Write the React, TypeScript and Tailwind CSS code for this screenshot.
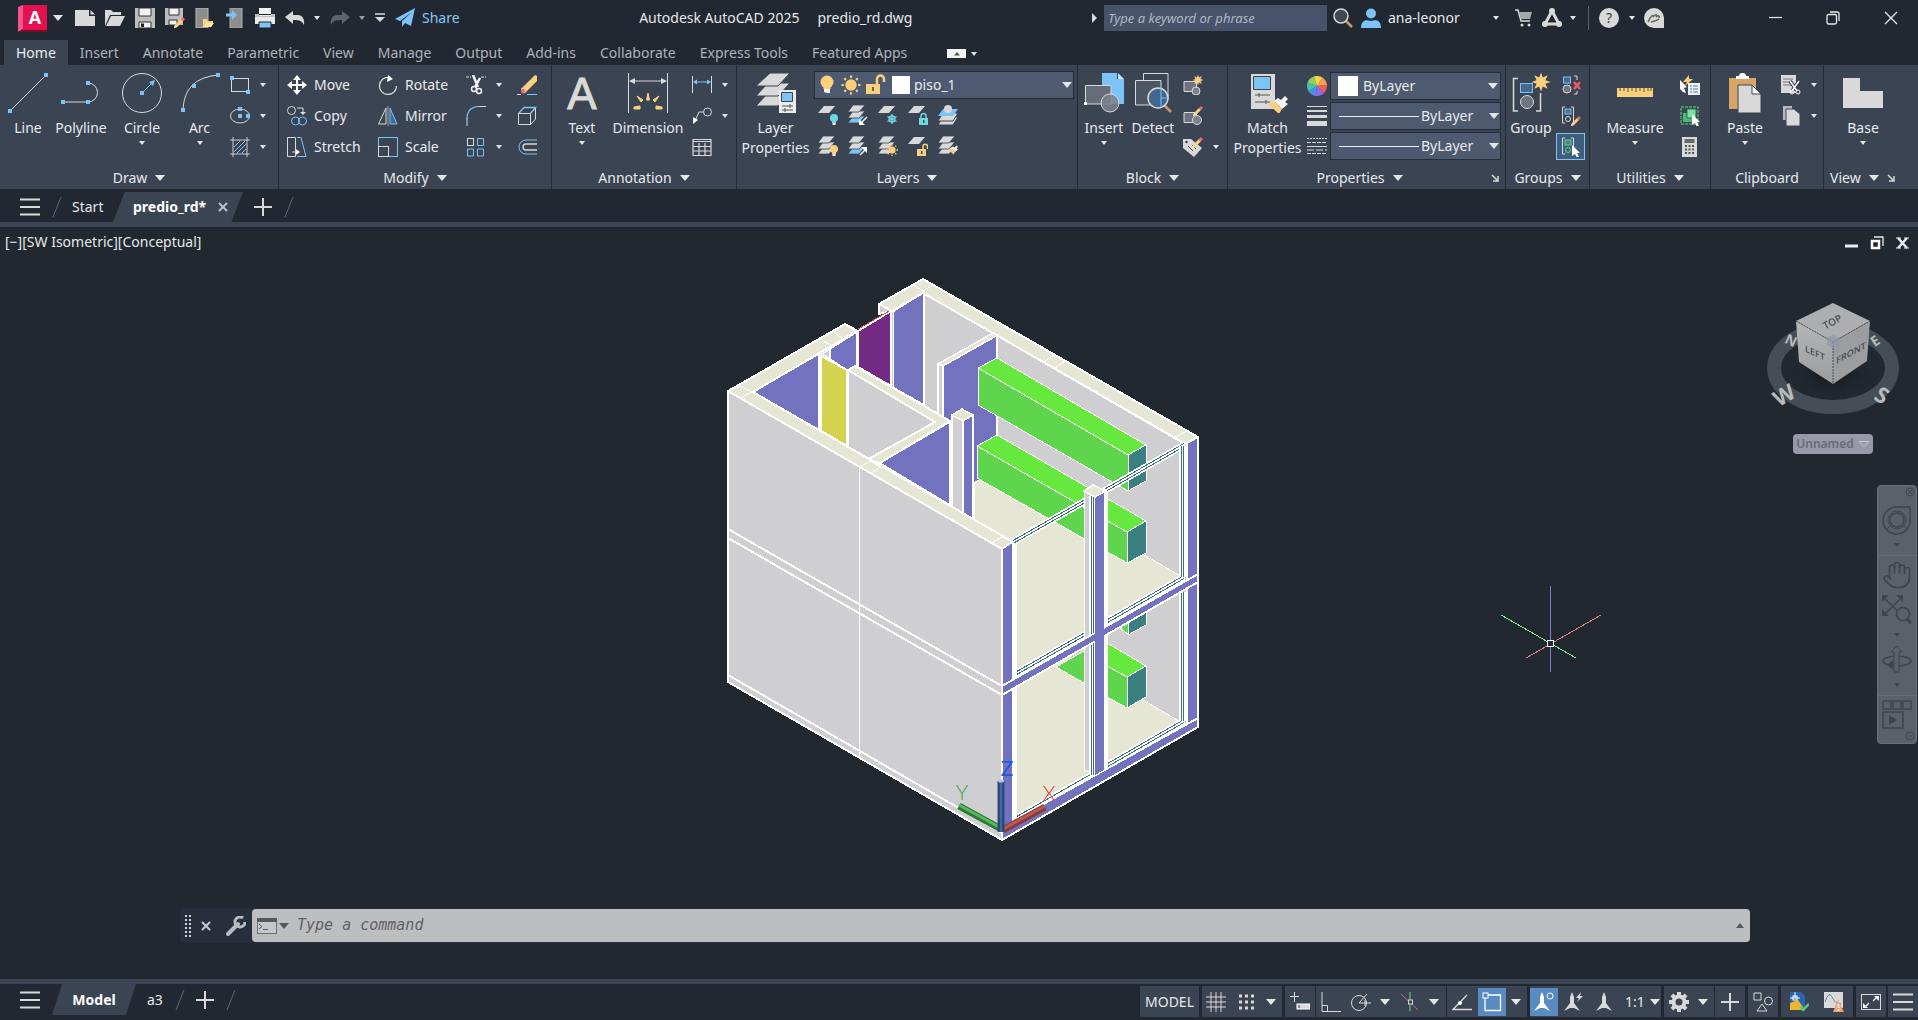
import type { ReactNode } from "react";
import { Hand, X } from "lucide-react";
import { clsx } from "clsx";

const RIBBON_TABS = [
  "Insert",
  "Annotate",
  "Parametric",
  "View",
  "Manage",
  "Output",
  "Add-ins",
  "Collaborate",
  "Express Tools",
  "Featured Apps",
];

const LIGHT = "#d9d9d9";
const BLUE = "#7cc3f7";
const AMBER = "#fbd07c";
const TEAL = "#6fd9e0";

/* ---------- primitives ---------- */

function Ico({ w = 20, h = 20, children }: { w?: number; h?: number; children: ReactNode }) {
  return (
    <svg width={w} height={h} viewBox={`0 0 ${w} ${h}`} fill="none" aria-hidden className="shrink-0">
      {children}
    </svg>
  );
}

function Caret({ small = false, className }: { small?: boolean; className?: string }) {
  return small ? (
    <svg width="6" height="4" viewBox="0 0 6 4" aria-hidden className={clsx("shrink-0", className)}>
      <path d="M0 0H6L3 4Z" fill="#e4e6e8" />
    </svg>
  ) : (
    <svg width="10" height="6" viewBox="0 0 10 6" aria-hidden className={clsx("shrink-0", className)}>
      <path d="M0 0H10L5 6Z" fill="#e4e6e8" />
    </svg>
  );
}

function Panel({
  title,
  className,
  caret = true,
  launcher = false,
  children,
}: {
  title: string;
  className: string;
  caret?: boolean;
  launcher?: boolean;
  children: ReactNode;
}) {
  return (
    <section className={clsx("flex shrink-0 flex-col border-r border-[#242b36]", className)}>
      <div className="flex h-[102px]">{children}</div>
      <div className="flex h-[22px] items-center">
        <button className="flex flex-1 items-center justify-center gap-2">
          {title}
          {caret && <Caret />}
        </button>
        {launcher && (
          <button aria-label={`${title} settings`} className="pr-1.5">
            <Ico w={8} h={8}>
              <path d="M1 1L6 6M7 2V7H2" stroke={LIGHT} strokeWidth="1.5" />
            </Ico>
          </button>
        )}
      </div>
    </section>
  );
}

function Big({
  label,
  second,
  menu = false,
  className,
  children,
}: {
  label: string;
  second?: string;
  menu?: boolean;
  className: string;
  children: ReactNode;
}) {
  return (
    <button className={clsx("flex shrink-0 flex-col items-center pt-2 leading-5 whitespace-nowrap", className)}>
      {children}
      <span className="mt-[5px]">{label}</span>
      {second && <span>{second}</span>}
      {menu && <Caret small className="mt-[3px]" />}
    </button>
  );
}

function Small({
  name,
  label,
  menu = false,
  className,
  children,
}: {
  name: string;
  label?: string;
  menu?: boolean;
  className?: string;
  children: ReactNode;
}) {
  return (
    <button aria-label={name} className={clsx("flex h-[31px] items-center", className)}>
      {children}
      {label && <span className="ml-[7px]">{label}</span>}
      {menu && <Caret small className="ml-[10px]" />}
    </button>
  );
}

function Col({ className, children }: { className?: string; children: ReactNode }) {
  return <div className={clsx("flex shrink-0 flex-col pt-1", className)}>{children}</div>;
}

/* ---------- icon fragments ---------- */

const node = (x: number, y: number) => <rect x={x - 2} y={y - 2} width="4" height="4" fill={BLUE} />;

function Stack({ last = LIGHT }: { last?: string }) {
  return (
    <g stroke="#3b4453" strokeWidth="0.8">
      <path d="M5 11H17L11 18H0Z" fill={last} />
      <path d="M5 6H17L11 13H0Z" fill={LIGHT} />
      <path d="M5 0H17L11 7H0Z" fill={LIGHT} />
    </g>
  );
}

const Sheet = () => <path d="M6 1H17L11 8H0Z" fill={LIGHT} />;

function Bulb({ x, y, fill }: { x: number; y: number; fill: string }) {
  return (
    <g transform={`translate(${x} ${y})`}>
      <circle cx="4" cy="4" r="4" fill={fill} />
      <path d="M2 6H6V9H2Z" fill={fill} />
      <path d="M2.5 9H5.500V11H2.500Z" fill="#fff" />
    </g>
  );
}

function Sun({ x, y, r }: { x: number; y: number; r: number }) {
  return (
    <g transform={`translate(${x} ${y})`}>
      <circle r={r * 0.6} fill={AMBER} />
      {[0, 45, 90, 135, 180, 225, 270, 315].map((a) => (
        <path key={a} d={`M0 ${-r * 0.75}V${-r}`} stroke={AMBER} strokeWidth={r * 0.22} transform={`rotate(${a})`} />
      ))}
    </g>
  );
}

function Lock({ x, y, fill, open = false }: { x: number; y: number; fill: string; open?: boolean }) {
  return (
    <g transform={`translate(${x} ${y})`}>
      <rect y="5" width="9" height="7" fill={fill} />
      <path d={open ? "M6 5V2.500A2 2 0 0 1 10.500 2.500V5" : "M2 5V3A2.500 2.500 0 0 1 7 3V5"} stroke={fill} strokeWidth="1.500" />
      <rect x="4" y="7" width="1.500" height="3" fill="#4a4a3c" />
    </g>
  );
}

function Pencil({ x, y, s = 1 }: { x: number; y: number; s?: number }) {
  return (
    <g transform={`translate(${x} ${y}) scale(${s})`}>
      <path d="M0 10L1 7L6 2L8 4L3 9Z" fill={AMBER} />
      <path d="M6 2L8 0L10 2L8 4Z" fill="#ef6a6a" />
      <path d="M0 10L1 7L3 9Z" fill="#f3ead8" />
    </g>
  );
}

function Burst({ x, y, r }: { x: number; y: number; r: number }) {
  const pts = Array.from({ length: 16 }, (_, i) => {
    const a = (i * Math.PI) / 8 - Math.PI / 2;
    const k = i % 2 ? r * 0.5 : r;
    return `${x + Math.cos(a) * k},${y + Math.sin(a) * k}`;
  }).join(" ");
  return <polygon points={pts} fill={AMBER} />;
}

const Cursor = ({ x, y }: { x: number; y: number }) => (
  <path d="M0 0L8 8H5L7 12L5 13L3 9L0 11Z" fill="#fff" transform={`translate(${x} ${y})`} />
);

function Brush({ x, y, s = 1 }: { x: number; y: number; s?: number }) {
  return (
    <g transform={`translate(${x} ${y}) scale(${s})`}>
      <path d="M0 7L6 4L14 12L11 17Z" fill={AMBER} />
      <path d="M6 4L10 1L13 3L17 -1L20 2L17 5L20 7L14 12Z" fill="#f4f4f4" />
    </g>
  );
}

/* ---------- title bar ---------- */

function TitleBar() {
  return (
    <header className="flex h-10 items-center pb-1 whitespace-nowrap">
      <div className="flex items-center pl-[18px]">
        <button aria-label="Application menu" className="flex items-center gap-1.5">
          <svg width="29" height="28" viewBox="0 0 29 28" aria-hidden>
            <path d="M0 3L5 1V25L0 28Z" fill="#f0598c" />
            <path d="M0 28L5 25H29V28Z" fill="#7d0d2c" />
            <rect x="5" y="1" width="24" height="25" fill="#e51050" />
            <text x="17" y="20" textAnchor="middle" fontSize="18" fontWeight="700" fill="#fff" className="[font-family:'Open_Sans',sans-serif]">A</text>
          </svg>
          <Caret />
        </button>
        <div className="ml-3 flex items-center gap-[10px]">
          <button aria-label="New">
            <Ico><path d="M0 2H14V8H20V18H0Z" fill={LIGHT} /><path d="M15.500 2L20 6.500H15.500Z" fill={LIGHT} /></Ico>
          </button>
          <button aria-label="Open">
            <Ico><path d="M0 18V2H6L8 4H16V7H5L0 18Z" fill={LIGHT} /><path d="M1 18L6 8H20L15 18Z" fill={LIGHT} /></Ico>
          </button>
          <button aria-label="Save">
            <Ico><path d="M0 0H20V20H0Z" fill="#bdbdbd" /><path d="M4 0H16V8H4Z" fill="#f2f2f2" stroke="#333" strokeWidth="1" /><path d="M4 14H16V20H4Z" fill="#f2f2f2" stroke="#333" strokeWidth="1" /><path d="M6 15.500H9V19H6Z" fill="#222" /></Ico>
          </button>
          <button aria-label="Save as">
            <Ico><path d="M0 0H18V17H0Z" fill="#bdbdbd" /><path d="M4 0H14V7H4Z" fill="#f2f2f2" stroke="#333" /><path d="M4 12H12V17H4Z" fill="#f2f2f2" stroke="#333" /><Pencil x={9} y={9} s={1.1} /></Ico>
          </button>
          <button aria-label="Open from mobile">
            <Ico><rect x="1" y="0" width="12" height="20" fill="#8d8d8d" stroke="#c4b9a8" /><path d="M8 19V11H12L13 13H18V15L16 19Z" fill={AMBER} /><path d="M8 19L11 15H19L16 19Z" fill="#ffe3a5" /></Ico>
          </button>
          <button aria-label="Save to mobile">
            <Ico><rect x="5" y="0" width="12" height="20" fill="#8d8d8d" stroke="#aaa" /><path d="M1 5.500H7V2L12 7L7 12V8.500H1Z" fill={BLUE} /></Ico>
          </button>
          <button aria-label="Plot">
            <Ico><path d="M4 0H16V6H4Z" fill="#f4f4f4" /><path d="M0 7H20V16H0Z" fill="#e9e9e9" /><path d="M0 6H4V8H16V6H20V9H0Z" fill="#bfbfbf" /><path d="M4 14H16V20H4Z" fill={BLUE} stroke="#222831" /></Ico>
          </button>
          <button aria-label="Undo">
            <Ico><path d="M0 9L8 3V7H13C17 7 20 11 19 17C17 13 15 12 8 12V16Z" fill={LIGHT} /></Ico>
          </button>
        </div>
        <Caret small className="ml-[9px]" />
        <button aria-label="Redo" className="ml-[10px]">
          <Ico><path d="M20 9L12 3V7H7C3 7 0 11 1 17C3 13 5 12 12 12V16Z" fill="#5c636d" /></Ico>
        </button>
        <Caret small className="ml-[9px] opacity-60" />
        <button aria-label="Customize toolbar" className="ml-[10px]">
          <Ico w={10} h={10}><path d="M0 1H10" stroke={LIGHT} strokeWidth="1.500" /><path d="M0 4H10L5 9Z" fill={LIGHT} /></Ico>
        </button>
        <button className="ml-[10px] flex items-center gap-[7px] text-[#86c8f6]">
          <Ico><path d="M0 11L20 0L16 18L10 15L7 19V13L17 4L5 13Z" fill={BLUE} /></Ico>
          Share
        </button>
      </div>

      <h1 className="flex flex-1 justify-center gap-[18px] text-[#e6e8ea]">
        <span>Autodesk AutoCAD 2025</span>
        <span>predio_rd.dwg</span>
      </h1>

      <div className="-mr-0.5 flex items-center">
        <Ico w={6} h={10}><path d="M0 0L5 5L0 10Z" fill={LIGHT} /></Ico>
        <input
          aria-label="Search"
          placeholder="Type a keyword or phrase"
          className="ml-1.5 h-[26px] w-[223px] bg-[#47536a] px-1 text-[13px] italic placeholder:text-[#b0b7c3]"
        />
        <button aria-label="Run search" className="ml-1.5">
          <Ico><path d="M13 13L19 19" stroke="#c9986b" strokeWidth="2.500" /><circle cx="8" cy="8" r="7" stroke={LIGHT} strokeWidth="1.500" fill="#41474f" /></Ico>
        </button>
        <button className="ml-2 flex w-[142px] items-center gap-[7px]">
          <Ico><circle cx="10" cy="5.500" r="5" fill={BLUE} /><path d="M0 20C0 13 4 11 10 13C16 11 20 13 20 20Z" fill={BLUE} /></Ico>
          ana-leonor
          <Caret small className="mr-1 ml-auto" />
        </button>
        <button aria-label="Store" className="ml-3">
          <Ico w={17} h={18}><path d="M0 1H3L6 12H15" stroke={LIGHT} strokeWidth="1.500" /><path d="M4 3H17L15 10H6Z" fill="#a5a8ac" /><circle cx="7" cy="16" r="1.500" fill={LIGHT} /><circle cx="14" cy="16" r="1.500" fill={LIGHT} /></Ico>
        </button>
        <button aria-label="Autodesk apps" className="ml-[10px] flex items-center gap-2">
          <Ico><path d="M10 3L17 16H3Z" stroke={LIGHT} strokeWidth="3" /><circle cx="10" cy="3" r="3" fill={LIGHT} /><circle cx="3" cy="16" r="3" fill={LIGHT} /><circle cx="17" cy="16" r="3" fill={LIGHT} /></Ico>
          <Caret small />
        </button>
        <span className="ml-3 h-6 w-px bg-[#59616c]" />
        <button aria-label="Help" className="ml-2.5 flex items-center gap-2.5">
          <Ico><circle cx="10" cy="10" r="10" fill={LIGHT} /><text x="10" y="15" textAnchor="middle" fontSize="14" fill="#333b46">?</text></Ico>
          <Caret small />
        </button>
        <button aria-label="Assistant" className="ml-[9px]">
          <Ico><path d="M10 0A10 10 0 1 0 10 20H20V10A10 10 0 0 0 10 0Z" fill={LIGHT} /><path d="M4 14C7 7 10 6 9 9C11 6 14 6 12 9C14 7 16 8 15 10M7 14C9 13 13 13 15 11" stroke="#666" strokeWidth="1.500" /></Ico>
        </button>
        <button aria-label="Minimize" className="ml-[82px] flex w-[58px] justify-center">
          <Ico w={13} h={14}><path d="M0 6.500H13" stroke="#e8eaec" strokeWidth="1.200" /></Ico>
        </button>
        <button aria-label="Restore" className="flex w-[58px] justify-center">
          <Ico w={14} h={14}><rect x="1" y="3.500" width="9.500" height="9.500" rx="1.500" stroke="#e8eaec" strokeWidth="1.300" /><path d="M4 1H11Q13 1 13 3V10" stroke="#e8eaec" strokeWidth="1.300" /></Ico>
        </button>
        <button aria-label="Close" className="flex w-[58px] justify-center">
          <Ico w={14} h={14}><path d="M1 1L13 13M13 1L1 13" stroke="#e8eaec" strokeWidth="1.300" /></Ico>
        </button>
      </div>
    </header>
  );
}

/* ---------- ribbon ---------- */

function RibbonTabs() {
  return (
    <nav className="flex h-[25px] items-stretch pl-1 whitespace-nowrap text-[#aeb3ba]">
      <button className="bg-[#3b4453] px-3 text-[#eceef0]">Home</button>
      {RIBBON_TABS.map((t) => (
        <button key={t} className="px-3">{t}</button>
      ))}
      <button aria-label="Minimize ribbon" className="ml-7 flex items-center gap-[5px] pt-0.5">
        <Ico w={19} h={9}><rect width="19" height="9" fill="#f2f2f2" /><path d="M7 6.500H13L10 3Z" fill="#555" /></Ico>
        <Caret small />
      </button>
    </nav>
  );
}

function DrawPanel() {
  return (
    <Panel title="Draw" className="w-[279px]">
      <Big label="Line" className="w-14">
        <Ico w={40} h={40}><path d="M2 38L38 2" stroke={LIGHT} />{node(2, 38)}{node(38, 2)}</Ico>
      </Big>
      <Big label="Polyline" className="w-[50px]">
        <Ico w={40} h={40}><path d="M1 29H27A9.500 9.500 0 0 0 27 10" stroke={LIGHT} />{node(2, 29)}{node(27, 29)}{node(27, 10)}</Ico>
      </Big>
      <Big label="Circle" menu className="w-[72px]">
        <Ico w={40} h={40}><circle cx="20" cy="20" r="19.500" stroke={LIGHT} /><path d="M20 20L30 10" stroke={BLUE} />{node(20, 20)}<path d="M27 9L33 7L31 13Z" fill={BLUE} /></Ico>
      </Big>
      <Big label="Arc" menu className="w-[43px]">
        <Ico w={40} h={40}><path d="M3 37Q4 5 38 2" stroke={LIGHT} />{node(3, 37)}{node(14, 13)}{node(38, 2)}</Ico>
      </Big>
      <Col className="ml-[9px]">
        <Small name="Rectangle" menu>
          <Ico><rect x="1.500" y="3.500" width="17" height="13" stroke={LIGHT} />{node(2, 3)}{node(18, 17)}</Ico>
        </Small>
        <Small name="Ellipse" menu>
          <Ico><ellipse cx="10" cy="10" rx="9.500" ry="7" stroke={LIGHT} />{node(10, 3)}{node(10, 10)}{node(18, 10)}</Ico>
        </Small>
        <Small name="Hatch" menu>
          <Ico><path d="M0 3H20M0 17H20M3 0V20M17 0V20" stroke={LIGHT} strokeWidth="0.900" /><path d="M4 10L10 4M4 15L15 4M7 16L16 7M12 16L16 12" stroke={BLUE} /></Ico>
        </Small>
      </Col>
    </Panel>
  );
}

function ModifyPanel() {
  return (
    <Panel title="Modify" className="w-[273px]">
      <Col className="ml-2 w-[91px]">
        <Small name="Move" label="Move">
          <Ico><path d="M10 1V19M1 10H19" stroke="#fff" strokeWidth="2" /><path d="M6 5L10 0L14 5ZM6 15L10 20L14 15ZM5 6L0 10L5 14ZM15 6L20 10L15 14Z" fill="#fff" /></Ico>
        </Small>
        <Small name="Copy" label="Copy">
          <Ico><circle cx="4.500" cy="4.500" r="4" stroke={LIGHT} /><path d="M10 2H16V7" stroke={LIGHT} /><path d="M13 6H19L16 9Z" fill={LIGHT} /><circle cx="8.500" cy="15" r="4" stroke={BLUE} /><circle cx="15.500" cy="15" r="4" stroke={BLUE} /></Ico>
        </Small>
        <Small name="Stretch" label="Stretch">
          <Ico><path d="M0.500 0.500H8.500V19.500H0.500Z" stroke={LIGHT} /><path d="M10 .5H14L19 19.500H10" stroke={BLUE} /><path d="M5 15H12" stroke={LIGHT} /><path d="M9 12L13 15L9 18Z" fill="#fff" /></Ico>
        </Small>
      </Col>
      <Col className="w-[88px]">
        <Small name="Rotate" label="Rotate">
          <Ico><path d="M11 2.500A8.500 8.500 0 1 0 18.500 11" stroke={LIGHT} strokeWidth="1.300" /><path d="M10 0L15 4L9 7Z" fill="#fff" /></Ico>
        </Small>
        <Small name="Mirror" label="Mirror">
          <Ico><path d="M8 2V18H.5Z" stroke={LIGHT} /><path d="M12 2V18H19Z" stroke={BLUE} fill="#3f6d90" /><path d="M10 0V20" stroke="#98a0aa" /></Ico>
        </Small>
        <Small name="Scale" label="Scale">
          <Ico><rect x=".5" y=".5" width="19" height="19" stroke={BLUE} /><rect x=".5" y="9.500" width="10" height="10" stroke={LIGHT} fill="#3b4453" /></Ico>
        </Small>
      </Col>
      <Col className="w-[51px]">
        <Small name="Trim" menu>
          <Ico><path d="M0 2H5M15 2H20" stroke={LIGHT} strokeDasharray="3 1" /><path d="M7 0L12 12M14 3L9 12" stroke="#f4f4f4" strokeWidth="2.500" /><circle cx="8" cy="14" r="2.500" stroke="#f4f4f4" strokeWidth="1.500" /><circle cx="13" cy="16" r="2.500" stroke="#f4f4f4" strokeWidth="1.500" /></Ico>
        </Small>
        <Small name="Fillet" menu>
          <Ico><path d="M1 20V12M13 .5H20" stroke={LIGHT} /><path d="M1 13Q1 1 13 .5" stroke={BLUE} strokeWidth="1.200" /></Ico>
        </Small>
        <Small name="Array" menu>
          <Ico><rect x="1.500" y="1.500" width="6" height="7" stroke={LIGHT} /><path d="M11.500 1.500H17.500V8.500H11.500ZM1.500 12H7.500V19H1.500ZM11.500 12H17.500V19H11.500Z" stroke={BLUE} /></Ico>
        </Small>
      </Col>
      <Col>
        <Small name="Erase">
          <Ico><path d="M0 19.500H4" stroke={LIGHT} /><path d="M10 19.500H20" stroke={BLUE} /><path d="M6 12L18 0L20 1V6L9 17Z" fill={AMBER} /><path d="M6 12L9 17L7 18.500L4 14Z" fill="#fff" /><ellipse cx="6" cy="16" rx="2" ry="2.500" fill="#ef6a6a" /></Ico>
        </Small>
        <Small name="Explode">
          <Ico><path d="M1.500 7.500H13.500V18.500H1.500ZM13.500 7.500L18.500 1.500V13L13.500 18.500" stroke={LIGHT} /><path d="M1.500 7.500L7 1.500H18.500L13.500 7.500" stroke={BLUE} strokeWidth="1.400" /></Ico>
        </Small>
        <Small name="Offset">
          <Ico><path d="M20 3H9A7 7 0 0 0 9 17H20" stroke={BLUE} /><path d="M20 7H9A3 3 0 0 0 9 13H20" stroke={LIGHT} strokeWidth="1.300" /></Ico>
        </Small>
      </Col>
    </Panel>
  );
}

function AnnotationPanel() {
  return (
    <Panel title="Annotation" className="w-[185px]">
      <Big label="Text" menu className="w-[60px]">
        <svg width="40" height="40" viewBox="0 0 40 40" aria-hidden className="overflow-visible">
          <text x="20" y="36" textAnchor="middle" fontSize="44" fill={LIGHT} stroke={LIGHT} className="[font-family:'Liberation_Sans',sans-serif]">A</text>
        </svg>
      </Big>
      <Big label="Dimension" className="w-[72px]">
        <Ico w={40} h={40}>
          <path d="M.5 0V40M39.500 0V40M2 8H38" stroke={LIGHT} />
          <path d="M1 8L7 5V11ZM39 8L33 5V11Z" fill={LIGHT} />
          <path d="M18.500 27L20 20L21.500 27ZM13 29L9 23L15 27ZM27 29L31 23L25 27ZM12 33L6 34V36H12ZM28 33L34 34V36H28Z" fill={AMBER} stroke={AMBER} />
        </Ico>
      </Big>
      <Col className="ml-2">
        <Small name="Linear" menu>
          <Ico><path d="M.5 1V18M19.500 1V18" stroke={LIGHT} /><path d="M2 7H18" stroke={BLUE} /><path d="M1 7L5 4.500V9.500ZM19 7L15 4.500V9.500Z" fill={BLUE} /></Ico>
        </Small>
        <Small name="Leader" menu>
          <Ico><circle cx="15.500" cy="6" r="4" stroke={LIGHT} /><path d="M11 6H7L3 15" stroke={LIGHT} /><path d="M1 18L1 11L6 14Z" fill="#fff" /></Ico>
        </Small>
        <Small name="Table">
          <Ico><path d="M1 2.500H19V18.500H1ZM1 4.500H19M1 9.500H19M1 14H19M7 6V18M13 6V18" stroke={LIGHT} strokeWidth="1.200" /></Ico>
        </Small>
      </Col>
    </Panel>
  );
}

function LayersPanel() {
  return (
    <Panel title="Layers" className="w-[341px]">
      <Big label="Layer" second="Properties" className="w-[77px]">
        <Ico w={40} h={40}>
          <g fill={LIGHT} stroke="#3b4453">
            <path d="M12 20H34L22 33H0Z" /><path d="M12 10H34L22 23H0Z" /><path d="M14 0H34L22 13H0Z" />
          </g>
          <path d="M23 17H40V40H23Z" fill="#ececec" /><path d="M25.500 19.500H36.500V28.500H25.500Z" fill={BLUE} stroke="#444" /><path d="M26 33H37M26 37H37M34 31V35M29 35V39" stroke="#555" />
        </Ico>
      </Big>
      <div className="flex flex-col pt-1.5">
        <div className="flex h-7 w-[260px] items-center border border-[#262d39] bg-[#4d5a6f] pl-1">
          <Ico w={84} h={22}>
            <circle cx="8" cy="8" r="6.500" fill={AMBER} /><path d="M4.500 11H11.500V15H4.500Z" fill={AMBER} /><path d="M5 15H11V19H8L5 18Z" fill="#f4f4f4" />
            <Sun x={32} y={11} r={9.5} />
            <path d="M47 10H61V20H47Z" fill={AMBER} /><path d="M58 10V5A3.500 3.500 0 0 1 65 5V8" stroke={AMBER} strokeWidth="2.500" /><path d="M54 13V17" stroke="#443" strokeWidth="1.500" />
            <rect x="73" y="2" width="11" height="18" fill="#fff" />
          </Ico>
          <span className="-ml-1 h-[18px] w-[11px] bg-white" />
          <select aria-label="Layer" className="min-w-0 flex-1 appearance-none bg-transparent pl-1 text-sm"><option>piso_1</option></select>
          <Caret className="mr-px" />
        </div>
        <div className="flex gap-[10px] pl-1">
          <Small name="Off"><Ico><Sheet /><Bulb x={12} y={9} fill={TEAL} /></Ico></Small>
          <Small name="Make current"><Ico><Stack last={BLUE} /><path d="M19 12L13 18" stroke="#fff" strokeWidth="1.500" /><path d="M11 20V14L17 20Z" fill="#fff" /></Ico></Small>
          <Small name="Freeze"><Ico><Sheet /><g stroke={TEAL} strokeWidth="1.300"><path d="M14 9V19M9.500 11.500L18.500 16.500M9.500 16.500L18.500 11.500" /><circle cx="14" cy="14" r="3" /></g></Ico></Small>
          <Small name="Lock"><Ico><Sheet /><Lock x={11} y={8} fill={TEAL} /></Ico></Small>
          <Small name="Match layer"><Ico><path d="M5 12H20L15 20H0Z" fill={LIGHT} stroke="#3b4453" /><path d="M5 8H20L15 16H0Z" fill={LIGHT} stroke="#3b4453" /><path d="M5 4H20L15 11H0Z" fill={BLUE} /><circle cx="10" cy="4" r="4" fill={LIGHT} /></Ico></Small>
        </div>
        <div className="flex gap-[10px] pl-1">
          <Small name="Turn all on"><Ico><Stack /><Bulb x={12} y={9} fill={AMBER} /></Ico></Small>
          <Small name="Change to current"><Ico><Stack last={BLUE} /><path d="M12 19L18 13" stroke="#fff" strokeWidth="1.500" /><path d="M19 11V17L13 11Z" fill="#fff" /></Ico></Small>
          <Small name="Thaw all"><Ico><Stack /><Sun x={14} y={14} r={6} /></Ico></Small>
          <Small name="Unlock"><Ico><Sheet /><Lock x={9} y={8} fill={AMBER} open /></Ico></Small>
          <Small name="Previous"><Ico><Stack /><Brush x={10} y={10} s={0.5} /></Ico></Small>
        </div>
      </div>
    </Panel>
  );
}

function BlockPanel() {
  const base = <path d="M1 6.500H13.500V16.500H1Z" fill="#6d747f" stroke={LIGHT} />;
  return (
    <Panel title="Block" className="w-[150px]">
      <Big label="Insert" menu className="w-[52px]">
        <Ico w={40} h={40}>
          <path d="M18 0H33V6H40V31H18Z" fill={BLUE} /><path d="M34 0L40 6H34Z" fill="#c8e6fb" />
          <path d="M1.500 12.500H27V31H1.500Z" fill="#666d78" stroke={LIGHT} /><rect x="0" y="29" width="3" height="3" fill="#fff" />
          <circle cx="26" cy="30" r="9" fill="#7b828d" fillOpacity=".85" stroke={LIGHT} />
        </Ico>
      </Big>
      <Big label="Detect" className="w-[46px]">
        <Ico w={40} h={40}>
          <path d="M10.500 .5H35V25H10.500Z" stroke={LIGHT} /><path d="M2.500 7.500H28V32H2.500Z" fill="#4c5563" stroke={LIGHT} />
          <path d="M31 32L38 39" stroke="#c9986b" strokeWidth="2.500" /><circle cx="25" cy="25" r="10" fill="#3f6790" stroke={LIGHT} strokeWidth="1.500" /><path d="M28 15V25H35M28 25V34" stroke={BLUE} />
        </Ico>
      </Big>
      <Col className="ml-[7px]">
        <Small name="Create"><Ico>{base}<circle cx="13" cy="16" r="4" fill="#7b828d" stroke={LIGHT} /><Burst x={15} y={5} r={5.5} /></Ico></Small>
        <Small name="Edit"><Ico>{base}<circle cx="14" cy="14" r="4.500" fill="#7b828d" stroke={LIGHT} /><Pencil x={10} y={0} /></Ico></Small>
        <Small name="Attributes" menu><Ico><path d="M0 2H8L19 11L11 20L0 11Z" fill={LIGHT} /><path d="M5 9L10 14M9 8L13 12" stroke="#444" /><circle cx="3.500" cy="5" r="1.200" fill="#333" /><Pencil x={9} y={0} s={1.1} /></Ico></Small>
      </Col>
    </Panel>
  );
}

function PropertiesPanel() {
  const combo = "flex h-7 w-[171px] items-center border border-[#262d39] bg-[#4d5a6f]";
  return (
    <Panel title="Properties" launcher className="w-[278px]">
      <Big label="Match" second="Properties" className="w-[79px]">
        <Ico w={40} h={40}>
          <path d="M3 1H27V36H3Z" fill={LIGHT} /><path d="M5.500 3.500H22.500V16.500H5.500Z" fill={BLUE} stroke="#444" /><path d="M7 22H22M7 29H22M11 20V24M18 27V31" stroke="#555" /><Brush x={20} y={24} />
        </Ico>
      </Big>
      <div className="flex flex-col gap-0.5 pt-[7px]">
        <div className="flex items-center gap-[3px]">
          <Ico>
            {["#f5a04c", "#ef5d5d", "#8e6bf0", "#4a90e8", "#3fc3a4", "#8bd35b", "#f7d44c"].map((c, i) => {
              const a = (i * 2 * Math.PI) / 7 - 1;
              const b = a + (2 * Math.PI) / 7;
              return <path key={c} fill={c} d={`M10 10L${10 + 10 * Math.cos(a)} ${10 + 10 * Math.sin(a)}A10 10 0 0 1 ${10 + 10 * Math.cos(b)} ${10 + 10 * Math.sin(b)}Z`} />;
            })}
          </Ico>
          <div className={combo}>
            <span className="ml-[7px] size-5 bg-white" />
            <select aria-label="Object color" className="min-w-0 flex-1 appearance-none bg-transparent pl-[5px]"><option>ByLayer</option></select>
            <Caret className="mr-0.5" />
          </div>
        </div>
        {["Lineweight", "Linetype"].map((name) => (
          <div key={name} className="flex items-center gap-[3px]">
            {name === "Lineweight" ? (
              <Ico><path d="M0 .5H20" stroke={LIGHT} /><path d="M0 5H20" stroke={LIGHT} strokeWidth="2" /><path d="M0 10.500H20" stroke={LIGHT} strokeWidth="3" /><path d="M0 17.500H20" stroke={LIGHT} strokeWidth="5" /></Ico>
            ) : (
              <Ico><path d="M0 2.500H20" stroke={LIGHT} strokeDasharray="2 1" /><path d="M0 6.500H20M0 17.500H20" stroke={LIGHT} strokeDasharray="4 1" /><path d="M0 10.500H20" stroke={LIGHT} /><path d="M0 14H20" stroke={LIGHT} strokeDasharray="7 2" /></Ico>
            )}
            <div className={combo}>
              <span className="ml-2 h-px w-20 bg-[#eceef0]" />
              <select aria-label={name} className="min-w-0 flex-1 appearance-none bg-transparent pl-0.5"><option>ByLayer</option></select>
              <Caret className="mr-px" />
            </div>
          </div>
        ))}
      </div>
    </Panel>
  );
}

function GroupsPanel() {
  const shapes = (c: string) => (
    <>
      <path d="M4 1H1.500V17H4M10 1H12.500V17" stroke={LIGHT} />
      <rect x="4" y="3" width="6" height="5" stroke={c} fill={c} fillOpacity=".35" />
      <circle cx="7" cy="13" r="2.500" stroke={c === BLUE ? LIGHT : c} />
    </>
  );
  return (
    <Panel title="Groups" className="w-[84px]">
      <Big label="Group" className="w-[50px]">
        <Ico w={40} h={40}>
          <path d="M7 5.500H2.500V38H7M25 38H29.500V20" stroke={LIGHT} strokeWidth="1.500" /><rect x="9.500" y="10.500" width="12" height="9" fill="#456a8d" stroke={BLUE} /><circle cx="16" cy="29" r="6.500" fill="#6f757e" stroke={LIGHT} /><Burst x={30} y={9} r={9.5} />
        </Ico>
      </Big>
      <Col>
        <Small name="Ungroup" className="justify-center">
          <Ico><rect x="2.500" y="2" width="7" height="6" stroke={BLUE} fill="#456a8d" /><circle cx="6" cy="14" r="4" fill="#6f757e" stroke={LIGHT} /><path d="M13 1H16V5M16 16V19H13" stroke={LIGHT} /><path d="M13 7L19 14M19 7L13 14" stroke="#ef5b5b" strokeWidth="2.500" /></Ico>
        </Small>
        <Small name="Group edit" className="justify-center"><Ico>{shapes(BLUE)}<Pencil x={10} y={10} /></Ico></Small>
        <button aria-label="Group selection" className="mt-0.5 flex h-[27px] w-[29px] items-center justify-center border border-[#7cc3f7] bg-[#3f5d7d]">
          <Ico>{shapes("#5fd48a")}<Cursor x={11} y={8} /></Ico>
        </button>
      </Col>
    </Panel>
  );
}

function UtilitiesPanel() {
  return (
    <Panel title="Utilities" className="w-[121px]">
      <Big label="Measure" menu className="w-[90px]">
        <Ico w={40} h={40}><rect x="2" y="15" width="36" height="9" fill={AMBER} /><path d="M5 15V18M9 15V18M13 15V19M17 15V18M21 15V19M25 15V18M29 15V19M33 15V18M36 15V18" stroke="#5b4d2b" /></Ico>
      </Big>
      <Col>
        <Small name="Quick select"><Ico><path d="M9 0L3 7H7L5 11L13 4H9Z" fill={AMBER} /><path d="M0 5L7 12L4 13L6 18L3 17L0 14Z" fill="#fff" /><rect x="8" y="8" width="12" height="12" fill="#f2f2f2" /><path d="M10 11H12M10 14H12M10 17H12M13 11H18M13 14H18M13 17H18" stroke="#3d83c9" /></Ico></Small>
        <Small name="Select all"><Ico><rect x="1" y="1" width="17" height="17" stroke="#5fd48a" strokeDasharray="3 1" /><path d="M3 7H13V16H3Z" fill="#4fb878" /><path d="M7 3H16V12H7Z" fill="#7be3a3" stroke="#2d6b48" /><Cursor x={12} y={8} /></Ico></Small>
        <Small name="Calculator"><Ico><rect x="2" y="0" width="15" height="20" fill={LIGHT} /><path d="M4.500 2H14.500V6H4.500Z" fill="#6a6a6a" /><path d="M5 9H14M5 12.500H14M5 16H14" stroke="#555" strokeWidth="2" strokeDasharray="2 1.500" /></Ico></Small>
      </Col>
    </Panel>
  );
}

function ClipboardPanel() {
  return (
    <Panel title="Clipboard" caret={false} className="w-[113px]">
      <Big label="Paste" menu className="w-[68px]">
        <Ico w={40} h={40}><path d="M4 5H31V36H4Z" fill="#d8a566" /><path d="M11 6V3H14Q14 0 17.500 0T21 3H24V6Z" fill="#fff" /><path d="M13 12H27L36 21V40H13Z" fill={LIGHT} stroke="#3b4453" /><path d="M27 12V21H36Z" fill="#fff" stroke="#3b4453" /></Ico>
      </Big>
      <Col className="ml-0.5">
        <Small name="Cut" menu><Ico><path d="M0 0H15V18H0Z" fill={LIGHT} /><path d="M2 4H12M2 7H12M2 10H12" stroke="#777" /><path d="M9 6L16 16M18 6L11 16" stroke="#333b46" strokeWidth="3.500" /><path d="M9 6L16 16M18 6L11 16" stroke="#fff" strokeWidth="1.500" /><circle cx="11" cy="17" r="2" stroke="#fff" /><circle cx="17" cy="17" r="2" stroke="#fff" /></Ico></Small>
        <Small name="Copy clip" menu><Ico><path d="M2 0H11V14H2Z" fill="#b7bac0" /><path d="M5 3H13L19 8V20H5Z" fill={LIGHT} stroke="#3b4453" /></Ico></Small>
      </Col>
    </Panel>
  );
}

function ViewPanel() {
  return (
    <section className="flex min-w-0 flex-1 flex-col">
      <div className="h-[102px]">
        <Big label="Base" menu className="w-[78px]">
          <Ico w={40} h={40}><path d="M0 5H17V18H40V35H0Z" fill={LIGHT} /></Ico>
        </Big>
      </div>
      <div className="flex h-[22px] items-center gap-2 pl-1.5">
        <button className="flex items-center gap-2">View<Caret /></button>
        <button aria-label="View settings"><Ico w={8} h={8}><path d="M1 1L6 6M7 2V7H2" stroke={LIGHT} strokeWidth="1.5" /></Ico></button>
      </div>
    </section>
  );
}

/* ---------- tabs under the ribbon ---------- */

const Slash = ({ className }: { className?: string }) => (
  <svg width="10" height="20" viewBox="0 0 10 20" aria-hidden className={clsx("shrink-0", className)}>
    <path d="M1 20L9 0" stroke="#5d6570" />
  </svg>
);

const Burger = () => (
  <Ico><path d="M0 2.500H20M0 10H20M0 17.500H20" stroke={LIGHT} strokeWidth="2" /></Ico>
);

const Plus = () => (
  <Ico w={18} h={18}><path d="M9 0V18M0 9H18" stroke={LIGHT} strokeWidth="2" /></Ico>
);

function FileTabs() {
  return (
    <nav className="flex h-[33px] items-end">
      <div className="flex h-[30px] items-center">
        <button aria-label="Drawings menu" className="ml-5"><Burger /></button>
        <Slash className="ml-3" />
        <button className="ml-2.5 w-[41px] text-left">Start</button>
        <div className="flex h-full w-[130px] items-center bg-[#3b4453] pl-5 [clip-path:polygon(9%_0,100%_0,91%_100%,0_100%)]">
          <button className="text-sm font-bold text-white">predio_rd*</button>
          <button aria-label="Close drawing" className="ml-2.5"><X size={14} strokeWidth={3.5} color="#b9bec5" /></button>
        </div>
        <button aria-label="New drawing" className="ml-[11px]"><Plus /></button>
        <Slash className="ml-3" />
      </div>
    </nav>
  );
}

/* ---------- model ---------- */

const WALL = "#cfcfd1";
const CAP = "#e5e6d4";
const SIDE = "#7272bf";
const TOP = "#66e83e";
const FRONT = "#5fd44d";
const END = "#3b8080";

function Face({ p, fill, line = 1.5 }: { p: string; fill: string; line?: number }) {
  return <polygon points={p} fill={fill} stroke="#fff" strokeWidth={line} strokeLinejoin="round" />;
}

// a pane seen edge-on: a white band with two thin dark seams
function Glass({ d, steep = false }: { d: string; steep?: boolean }) {
  return (
    <g fill="none">
      <path d={d} stroke="#fff" strokeWidth="7" />
      <path d={d} stroke="#3f6f7c" transform={steep ? "translate(-1 0)" : "translate(0 -1.5)"} />
      <path d={d} stroke="#3f6f7c" transform={steep ? "translate(1 0)" : "translate(0 1.5)"} />
    </g>
  );
}

function Building() {
  return (
    <svg width="480" height="580" viewBox="720 270 480 580" shapeRendering="crispEdges" role="img" aria-label="Building model">
      {/* shell */}
      <Face p="728,391 845,324 858,331 891,311 879,314 879,304 923,279 1198,437 1198,727 1002,840 728,682" fill={WALL} line={2} />

      {/* rear rooms */}
      <Face p="830,349 857,332 857,367 847,370 830,359" fill={SIDE} />
      <Face p="858,331 891,311 891,386 858,367" fill="#732a82" line={2} />
      <path d="M858 329L891 310" stroke="#c0504a" />
      <Face p="893,312 923,293 923,404 893,387" fill={SIDE} line={1} />
      <Face p="924,293 993,333 938,364 938,414 924,405" fill={WALL} line={1} />
      <Face p="943,366 997,335 997,470 943,501" fill={SIDE} />
      <Face p="938,364 993,333 997,335 943,366 943,418 938,415" fill={WALL} />

      {/* right wall and upper floor */}
      <Face p="997,336 1184,444 1184,578 997,470" fill={WALL} line={1} />
      <Face p="974,483 997,470 1184,578 1013,677 974,655" fill={CAP} line={1} />

      {/* counters, upper storey */}
      <Face p="978,368 997,358 1146,445 1128,455" fill={TOP} line={1} />
      <Face p="978,368 1128,455 1128,491 978,405" fill={FRONT} line={1} />
      <Face p="1128,455 1146,445 1146,481 1128,491" fill={END} line={1} />
      <Face p="977,446 997,435 1146,521 1127,532" fill={TOP} line={1} />
      <Face p="977,446 1127,532 1127,563 977,478" fill={FRONT} line={1} />
      <Face p="1127,532 1146,521 1146,553 1127,563" fill={END} line={1} />

      {/* wall caps */}
      <Face p="879,304 923,279 1198,437 1186,444 923,293 892,311" fill={CAP} line={2} />
      <Face p="938,364 993,333 998,335 943,366" fill={CAP} />
      <path d="M913 285L923 291L933 285M1044 362L1054 355L1065 361L1055 368M1175 437L1187 431L1197 437" stroke="#fff" fill="none" />

      {/* lower storey interior */}
      <path d="M1013 689L1187 588V722L1013 822Z" fill={CAP} />
      <path d="M1056 664L1187 588V726L1056 650Z" fill={WALL} />
      <path d="M1184 724L1107 679" stroke="#fff" />
      <Face p="1120,628 1128,623 1128,634" fill={FRONT} line={1} />
      <Face p="1128,615 1146,605 1146,625 1128,635" fill={END} line={1} />
      <Face p="1056,667 1084,651 1084,683" fill={FRONT} line={1} />
      <Face p="1100,640 1107,643 1146,666 1127,677 1100,662" fill={TOP} line={1} />
      <Face p="1100,662 1127,677 1127,708 1100,693" fill={FRONT} line={1} />
      <Face p="1127,677 1146,666 1146,697 1127,708" fill={END} line={1} />

      {/* front rooms */}
      <Face p="753,392 819,354 819,430" fill={SIDE} />
      <Face p="821,356 847,370 847,446 821,431" fill="#d3d350" line={2} />
      <Face p="848,370 935,422 868,459 848,447" fill={WALL} />
      <Face p="880,463 950,422 950,505" fill={SIDE} />
      <Face p="848,370 855,366 950,421 880,463 867,460 935,422" fill={CAP} line={2} />
      <Face p="952,415 963,421 963,514 952,507" fill={WALL} />
      <Face p="963,421 973,415 973,519 963,514" fill={SIDE} />
      <Face p="952,415 962,409 973,415 963,421" fill={CAP} />

      {/* left elevation */}
      <Face p="728,391 845,324 857,331 753,392 1013,542 1002,549" fill={CAP} line={2} />
      <Face p="822,354 830,349 830,359 822,354" fill={WALL} />
      <Face p="728,391 1002,549 1002,840 728,682" fill={WALL} line={2} />
      <path d="M859 468V757" stroke="#fff" />
      <path d="M728 529L1002 686M728 538L1002 695M728 675L1002 833" stroke="#fff" strokeWidth="2" />
      <path d="M728 391L740 386L752 392L740 398M822 340L834 347M834 333L846 340M860 467L870 461L881 467L871 473M992 543L1002 537L1012 542L1002 549" stroke="#fff" fill="none" />

      {/* glazing */}
      <Glass d="M1013 542L1094 496" />
      <Glass d="M1104 491L1184 445" />
      <Glass d="M1015 674L1094 629" />
      <Glass d="M1106 622L1184 577" />
      <Glass d="M1015 819L1094 774" />
      <Glass d="M1106 766L1184 721" />
      <Glass steep d="M1182 446V577" />
      <Glass steep d="M1182 592V721" />

      {/* front frame */}
      <Face p="1002,549 1013,542 1013,826 1002,832" fill={SIDE} />
      <path d="M1015 543V819" stroke="#fff" strokeWidth="3" />
      <Face p="1187,443 1198,437 1198,727 1187,733" fill={SIDE} line={2} />
      <path d="M1084 491L1090 494V772L1084 770Z" fill={WALL} stroke="#fff" />
      <Glass steep d="M1092 496V775" />
      <path d="M1106 491V768" stroke="#fff" strokeWidth="4" />
      <path d="M1002 686L1198 574V582L1002 695Z" fill={SIDE} />
      <path d="M1002 686L1198 574M1002 695L1198 582" stroke="#fff" strokeWidth="2" />
      <path d="M1002 828L1198 718V727L1002 840Z" fill={SIDE} />
      <path d="M1015 820L1198 718M1002 840L1198 727" stroke="#fff" strokeWidth="2" />
      <path d="M1095 497L1104 492V770L1095 775Z" fill={SIDE} />
      <path d="M1094.500 497V630M1094.500 644V775" stroke="#fff" />
      <Face p="1084,491 1093,485 1106,491 1095,497" fill={CAP} />
      <path d="M1198 437V727M1002 549V840" stroke="#fff" strokeWidth="2" />

      {/* coordinate tripod */}
      <g shapeRendering="auto" fill="none">
        <path d="M959 806L1001 829" stroke="#2d7a33" strokeWidth="7" />
        <path d="M959 805L1001 828" stroke="#5cb561" strokeWidth="3" />
        <path d="M1003 830L1045 807" stroke="#8a3a3a" strokeWidth="7" />
        <path d="M1003 829L1045 806" stroke="#b75b56" strokeWidth="3" />
        <path d="M1001 781V832" stroke="#2a4a7c" strokeWidth="7" />
        <path d="M1001 781V832" stroke="#42689f" strokeWidth="2" />
        <ellipse cx="1001" cy="781" rx="3" ry="1.500" fill="#a9c6ee" />
      </g>
      <g shapeRendering="auto" textAnchor="middle" fontSize="21" fontWeight="300" className="[font-family:Lato,sans-serif]">
        <text x="1007" y="776" fill="#1d5ae6" fontWeight="400">Z</text>
        <text x="962" y="800" fill="#3aa53f">Y</text>
        <text x="1049" y="801" fill="#e03a34">X</text>
      </g>
    </svg>
  );
}

function Crosshair() {
  return (
    <svg width="102" height="88" viewBox="0 0 102 88" fill="none" shapeRendering="crispEdges" aria-hidden>
      <path d="M50.500 1V87" stroke="#7d7de0" />
      <path d="M1 30L76 73" stroke="#7fee8a" />
      <path d="M101 30L26 73" stroke="#e07f84" />
      <rect x="47.500" y="55.500" width="6" height="6" fill="#212830" stroke="#fff" />
    </svg>
  );
}

function ViewCube() {
  return (
    <svg width="136" height="118" viewBox="1765 300 136 118" role="img" aria-label="View cube">
      <defs>
        <linearGradient id="cube-left" x1="0" y1="0" x2="0" y2="1">
          <stop offset="0" stopColor="#b4b6b8" />
          <stop offset="1" stopColor="#9a9c9f" />
        </linearGradient>
        <radialGradient id="cube-shadow">
          <stop offset="0" stopColor="#11151a" />
          <stop offset="1" stopColor="#212830" stopOpacity="0" />
        </radialGradient>
      </defs>
      <ellipse cx="1833" cy="368" rx="59" ry="39" fill="none" stroke="#454d56" strokeWidth="14" />
      <ellipse cx="1833" cy="374" rx="44" ry="26" fill="url(#cube-shadow)" />
      <g fill="#b9babb" fontWeight="700" textAnchor="middle" className="[font-family:'Open_Sans',sans-serif]">
        <text fontSize="14" transform="translate(1789 345) rotate(25)">N</text>
        <text fontSize="14" transform="translate(1878 345) rotate(-35)">E</text>
        <text fontSize="22" transform="translate(1788 402) rotate(-30)">W</text>
        <text fontSize="22" transform="translate(1878 402) rotate(30)">S</text>
      </g>
      <path d="M1796 321L1833 342V384L1799 362Z" fill="url(#cube-left)" />
      <path d="M1870 321L1833 342V384L1867 361Z" fill="#9b9da0" />
      <path d="M1833 303L1870 321L1833 342L1796 321Z" fill="#acaeb0" />
      <path d="M1796 321L1833 342L1870 321M1833 342V384" stroke="#4a4e53" strokeDasharray="2 1" fill="none" />
      <path d="M1827 338L1833 335L1839 338V345L1833 348L1827 345Z" fill="#9099a8" fillOpacity=".7" />
      <g fill="#4a4e54" fontWeight="600" textAnchor="middle" className="[font-family:'Open_Sans',sans-serif]">
        <text fontSize="10" transform="translate(1834 325) rotate(-28)">TOP</text>
        <text fontSize="9" transform="translate(1815 356) skewY(25)">LEFT</text>
        <text fontSize="9" transform="translate(1851 356) skewY(-28)">FRONT</text>
      </g>
    </svg>
  );
}

function NavBar() {
  const tool = "flex w-full justify-center";
  const dark = "#3d444d";
  const Drop = () => <Ico w={6} h={4}><path d="M0 0H6L3 4Z" fill={dark} /></Ico>;
  return (
    <div className="flex h-[259px] w-10 flex-col items-center rounded border border-[#6b7178] bg-[#5b6168]">
      <button aria-label="Close navigation bar" className="mr-px self-end pt-px">
        <Ico w={10} h={10}><circle cx="5" cy="5" r="4" stroke={dark} /><path d="M3 3L7 7M7 3L3 7" stroke={dark} /></Ico>
      </button>
      <button aria-label="Steering wheel" className={clsx(tool, "mt-2")}>
        <Ico w={30} h={30}><path d="M15 2H28V15A13.500 13.500 0 1 1 15 2Z" stroke={dark} strokeWidth="1.500" /><circle cx="15" cy="15" r="7" stroke={dark} strokeWidth="1.500" /><circle cx="15" cy="15" r="9" stroke={dark} /><path d="M8 21L5 24M22 21L25 24" stroke={dark} /></Ico>
      </button>
      <div className="mt-2 flex h-3 items-start"><Drop /></div>
      <button aria-label="Pan" className={clsx(tool, "border-t border-[#666c74] pt-1")}><Hand size={30} strokeWidth={1.3} color={dark} /></button>
      <button aria-label="Zoom" className={clsx(tool, "mt-[5px]")}>
        <Ico w={30} h={30}><path d="M2 3L20 20M20 2L2 20" stroke={dark} strokeWidth="1.500" /><path d="M0 0H7L0 7ZM21 0V7L14 0ZM0 21V14L7 21Z" fill={dark} /><circle cx="21" cy="19" r="6.500" fill="#5b6168" stroke={dark} strokeWidth="1.500" /><path d="M25 24L29 28" stroke={dark} strokeWidth="3" /></Ico>
      </button>
      <div className="mt-2 flex h-3 items-start"><Drop /></div>
      <button aria-label="Orbit" className={tool}>
        <Ico w={30} h={30}><ellipse cx="15" cy="16" rx="14" ry="5" stroke={dark} strokeWidth="1.500" /><path d="M12 27V7H9L15 1L20 7H17V27Z" fill="#5b6168" stroke={dark} /><path d="M5 20L11 15V25Z" fill={dark} /></Ico>
      </button>
      <div className="mt-2 flex h-3 items-start"><Drop /></div>
      <button aria-label="Show motion" className={clsx(tool, "border-t border-[#666c74] pt-1")}>
        <Ico w={30} h={30}><path d="M1 1H9V9H1ZM11 1H19V9H11ZM21 1H29V9H21ZM1 12H21V28H1Z" stroke={dark} strokeWidth="1.500" /><path d="M7 15L15 20L7 25Z" fill={dark} /></Ico>
      </button>
      <button aria-label="Customize navigation bar" className="mt-auto mr-px self-end pb-0.5">
        <Ico w={10} h={10}><circle cx="5" cy="5" r="4" stroke={dark} /><path d="M3 5H7" stroke={dark} /></Ico>
      </button>
    </div>
  );
}

function CommandLine() {
  return (
    <div className="flex h-[35px] items-center rounded bg-[#282e3b]">
      <div className="flex w-[72px] items-center pl-1">
        <Ico w={8} h={22}><path d="M2 0V22M6 0V22" stroke="#d0d2d4" strokeWidth="2" strokeDasharray="2 2" /></Ico>
        <button aria-label="Close command line" className="ml-[7px]"><X size={14} strokeWidth={3.5} color="#c3c6ca" /></button>
        <button aria-label="Customize" className="ml-[13px]">
          <Ico><path d="M2 18L12 8" stroke="#b8bbbf" strokeWidth="4" strokeLinecap="round" /><path d="M17 2A5 5 0 1 0 19 6" stroke="#b8bbbf" strokeWidth="3" /></Ico>
        </button>
      </div>
      <div className="flex h-[33px] flex-1 items-center rounded-sm bg-[#bdbec0] pr-1.5 pl-[5px]">
        <button aria-label="Recent commands" className="flex items-center gap-0.5">
          <Ico w={20} h={16}><rect x=".5" y=".5" width="19" height="15" stroke="#6b6d70" fill="#c6c7c9" /><path d="M0 0H20V4H0Z" fill="#55575a" /><path d="M2 6L5 8.500L2 11M6 11.500H11" stroke="#55575a" /></Ico>
          <svg width="10" height="6" viewBox="0 0 10 6" aria-hidden><path d="M0 0H10L5 6Z" fill="#55575a" /></svg>
        </button>
        <input
          aria-label="Command"
          placeholder="Type a command"
          className="ml-2 min-w-0 flex-1 bg-transparent text-[15px] italic placeholder:text-[#5f6163] [font-family:'DejaVu_Sans_Mono',monospace]"
        />
        <Ico w={8} h={5}><path d="M0 5H8L4 0Z" fill="#55575a" /></Ico>
      </div>
    </div>
  );
}

function Viewport() {
  return (
    <main className="relative min-h-0 flex-1 overflow-hidden border-t-[5px] border-b-[5px] border-[#3b4453] bg-[#212830]">
      <div className="flex items-start justify-between pt-1 pl-[5px]">
        <p className="text-sm leading-[22px] text-[#e6e8ea]">[−][SW Isometric][Conceptual]</p>
        <div className="flex items-center gap-3 pt-[5px] pr-[9px]">
          <button aria-label="Minimize drawing"><Ico w={13} h={14}><path d="M0 10H13" stroke="#e8eaec" strokeWidth="3" /></Ico></button>
          <button aria-label="Restore drawing"><Ico w={14} h={14}><path d="M4 1H13V10" stroke="#e8eaec" strokeWidth="1.300" /><rect x="2" y="5" width="7" height="7" stroke="#fff" strokeWidth="2.500" /></Ico></button>
          <button aria-label="Close drawing window"><Ico w={13} h={14}><path d="M2 2L11 12M11 2L2 12" stroke="#e8eaec" strokeWidth="2.500" /><path d="M0 2H5M8 2H13M0 12H5M8 12H13" stroke="#e8eaec" /></Ico></button>
        </div>
      </div>

      <div className="absolute top-[43px] left-1/2 -translate-x-[239px]"><Building /></div>
      <div className="absolute top-[358px] right-[316px]"><Crosshair /></div>
      <div className="absolute top-[73px] right-[17px] flex flex-col items-center">
        <ViewCube />
        <button className="mt-4 flex h-5 w-20 items-center justify-center gap-1 rounded bg-[#9799a6] text-xs font-semibold text-[#686b76]">
          Unnamed
          <Ico w={12} h={6}><path d="M1 0.500H11L6 5.500Z" stroke="#c0c2cc" /></Ico>
        </button>
      </div>
      <div className="absolute top-[258px] right-px"><NavBar /></div>
      <div className="absolute right-[168px] bottom-[36px] left-[180px]"><CommandLine /></div>
    </main>
  );
}

/* ---------- status bar ---------- */

function Cell({ className, children }: { className?: string; children: ReactNode }) {
  return <div className={clsx("flex h-[31px] items-center bg-[#3b4453]", className)}>{children}</div>;
}

function Tool({ name, on = false, children }: { name: string; on?: boolean; children: ReactNode }) {
  return (
    <button aria-label={name} className={clsx("flex h-7 w-7 items-center justify-center", on && "bg-[#5a8ac2]")}>
      {children}
    </button>
  );
}

const ROCKET = "M10 0L12 5V11L18 19L12 16H8L2 19L8 11V5Z";

function StatusBar() {
  return (
    <footer className="flex h-9 items-start justify-between whitespace-nowrap">
      <div className="flex h-[31px] items-center">
        <button aria-label="Layouts menu" className="ml-5"><Burger /></button>
        <button className="ml-3 h-full w-[84px] bg-[#3b4453] text-sm font-bold text-white [clip-path:polygon(12%_0,100%_0,88%_100%,0_100%)]">Model</button>
        <button className="ml-[11px]">a3</button>
        <Slash className="ml-3" />
        <button aria-label="New layout" className="ml-[11px]"><Plus /></button>
        <Slash className="ml-3" />
      </div>

      <div className="flex gap-[3px] pt-0.5">
        <Cell className="w-[59px] justify-center"><button>MODEL</button></Cell>
        <Cell className="w-20 gap-0.5 pr-1.5">
          <Tool name="Grid"><Ico><path d="M5 0V20M10 0V20M15 0V20M0 5H20M0 10H20M0 15H20" stroke={LIGHT} /></Ico></Tool>
          <Tool name="Snap"><Ico><path d="M3 4H18M3 10H18M3 16H18" stroke={LIGHT} strokeWidth="3" strokeDasharray="3 3" /></Ico></Tool>
          <Caret className="ml-1" />
        </Cell>
        <div className="flex gap-px">
          <Cell className="w-[30px] justify-center">
            <Tool name="Dynamic input"><Ico><path d="M4.500 0V10M0 4.500H9" stroke={LIGHT} /><rect x="7" y="12" width="13" height="5" fill={LIGHT} stroke="#fff" /><path d="M9 13V16" stroke="#333" /></Ico></Tool>
          </Cell>
          <Cell className="w-[130px] gap-0.5 pl-px">
            <Tool name="Ortho"><Ico><path d="M1 0V19.500H20M1 13.500H6.500V19.500" stroke={LIGHT} /></Ico></Tool>
            <Tool name="Polar"><Ico><circle cx="8" cy="11" r="7.500" stroke={LIGHT} /><path d="M8 11H20M8 11L16 2M14 8V14" stroke={LIGHT} /></Ico></Tool>
            <Caret className="mr-1 ml-[3px]" />
            <Tool name="Isometric drafting"><Ico><path d="M10 0V19" stroke="#5cb67b" strokeWidth="1.300" /><path d="M1 2L18 18" stroke="#c96a78" /><rect x="8.500" y="8" width="4" height="4" stroke={LIGHT} fill="#3b4453" /></Ico></Tool>
            <Caret className="ml-[3px]" />
          </Cell>
          <Cell className="w-20 gap-0.5 pl-px">
            <Tool name="Object snap tracking"><Ico><path d="M20 17.500H1L15 3" stroke={LIGHT} strokeWidth="1.300" /><circle cx="8" cy="11" r="2" fill="#fff" /></Ico></Tool>
            <Tool name="Object snap" on><Ico><path d="M3 6V18.500H18.500V3H6" stroke="#fff" strokeWidth="1.300" /><rect x="1" y="1" width="5" height="5" stroke="#fff" /></Ico></Tool>
            <Caret className="ml-[3px]" />
          </Cell>
        </div>
        <Cell className="w-[131px] gap-0.5">
          <Tool name="Annotation visibility" on><Ico><path d={ROCKET} fill="#fff" transform="translate(-2 0)" /><circle cx="16" cy="4" r="3" stroke="#fff" fill="#5a8ac2" /></Ico></Tool>
          <Tool name="Auto scale"><Ico><path d={ROCKET} fill={LIGHT} transform="translate(-2 0)" /><path d="M17 0L12 6H15L13 10L19 4H16Z" fill={LIGHT} /></Ico></Tool>
          <Tool name="Annotation scale"><Ico><path d={ROCKET} fill={LIGHT} /></Ico></Tool>
          <button className="ml-[5px] flex items-center gap-[5px]">1:1<Caret /></button>
        </Cell>
        <div className="flex gap-px">
          <Cell className="w-[50px] gap-[5px] pl-px">
            <Tool name="Workspace">
              <Ico>
                <g fill={LIGHT}>
                  {[0, 45, 90, 135].map((a) => <rect key={a} x="8" y="0" width="4" height="20" transform={`rotate(${a} 10 10)`} />)}
                  <circle cx="10" cy="10" r="7.500" />
                </g>
                <circle cx="10" cy="10" r="3.500" fill="#3b4453" />
              </Ico>
            </Tool>
            <Caret />
          </Cell>
          <Cell className="w-[30px] justify-center"><Tool name="Annotation monitor"><Plus /></Tool></Cell>
        </div>
        <Cell className="w-[30px] justify-center"><Tool name="Isolate"><Ico><path d="M1 1H8V8H1ZM9 12L14 19H4Z" stroke={LIGHT} /><circle cx="15.500" cy="9" r="4" stroke={LIGHT} /></Ico></Tool></Cell>
        <Cell className="w-[72px] gap-[7px] pl-1">
          <Tool name="Trusted file"><Ico><path d="M1 0H12L16 4V16H1Z" fill="#2866ad" /><path d="M1 11L9 8L16 18H1Z" fill="#f2b531" /><path d="M6 0V6M1 6H11" stroke="#fff" /><rect x="4" y="4" width="4" height="4" stroke="#fff" /><path d="M11 15L14 18L20 12" stroke="#58c878" strokeWidth="2.500" /></Ico></Tool>
          <Tool name="Hardware acceleration"><Ico><rect width="19" height="16" fill={LIGHT} /><path d="M1 10Q5 -2 8 5T17 12" stroke="#6b86a8" /><path d="M14 8L20 20H9Z" fill="#f3a26d" /><path d="M14.500 12V16M14.500 17V19" stroke="#fff" strokeWidth="1.500" /></Ico></Tool>
        </Cell>
        <div className="flex gap-0.5">
          <Cell className="w-[30px] justify-center"><Tool name="Clean screen"><Ico><rect x=".5" y="2.500" width="19" height="15" stroke={LIGHT} /><path d="M12 9L16 5M8 11L4 15" stroke="#fff" strokeWidth="1.200" /><path d="M13 4H18V9ZM2 11V16H7Z" fill="#fff" /></Ico></Tool></Cell>
          <Cell className="w-[30px] justify-center"><Tool name="Customization"><Burger /></Tool></Cell>
        </div>
      </div>
    </footer>
  );
}

export default function App() {
  return (
    <div className="flex h-screen flex-col overflow-hidden bg-[#222831] text-sm text-[#e8eaec] [font-family:'Noto_Sans',sans-serif]">
      <TitleBar />
      <RibbonTabs />
      <div className="flex h-[124px] shrink-0 bg-[#3b4453]">
        <DrawPanel />
        <ModifyPanel />
        <AnnotationPanel />
        <LayersPanel />
        <BlockPanel />
        <PropertiesPanel />
        <GroupsPanel />
        <UtilitiesPanel />
        <ClipboardPanel />
        <ViewPanel />
      </div>
      <FileTabs />
      <Viewport />
      <StatusBar />
    </div>
  );
}
